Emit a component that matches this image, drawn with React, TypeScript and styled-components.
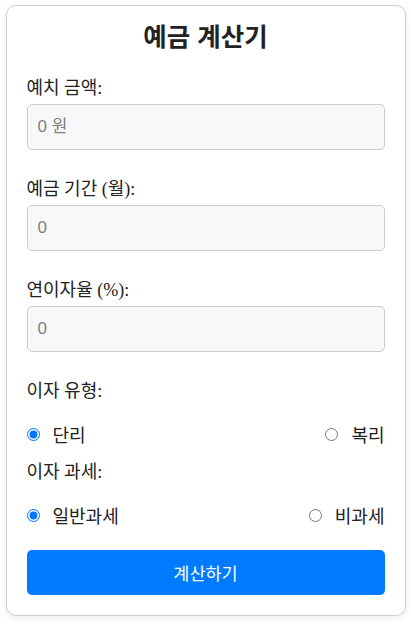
import React, { useState } from "react";
import styled, { createGlobalStyle } from "styled-components";

const GlobalStyle = createGlobalStyle`
  body {
    margin: 0;
    background: #ffffff;
    font-family: "Liberation Serif", "Noto Sans CJK KR", serif;
    color: #222;
  }
`;

const Card = styled.div`
  box-sizing: border-box;
  max-width: 400px;
  margin: 5px auto;
  padding: 10px 20px 20px;
  border: 1px solid #cfcfcf;
  border-radius: 10px;
  box-shadow: 0 2px 6px rgba(0, 0, 0, 0.08);
  background: #fff;
`;

const Title = styled.h2`
  margin: 0 0 20px;
  text-align: center;
  font-size: 25.5px;
  font-weight: bold;
  font-family: "Liberation Sans", "Noto Sans CJK KR", sans-serif;
  color: #222;
`;

const Group = styled.div`
  margin-bottom: 24px;
`;

const Label = styled.label`
  display: block;
  font-size: 18px;
  margin-bottom: 5px;
`;

const Input = styled.input`
  box-sizing: border-box;
  width: 100%;
  height: 46px;
  padding: 0 10px;
  border: 1px solid #cccccc;
  border-radius: 5px;
  background: #f7f8fa;
  font-size: 17px;
  font-family: "Liberation Sans", "Noto Sans CJK KR", sans-serif;
  color: #222;
  outline: none;

  &::placeholder {
    color: #808080;
  }
`;

const RadioRow = styled.div<{ $bottom: number }>`
  display: flex;
  justify-content: space-between;
  align-items: center;
  margin: 19px 0 ${(p) => p.$bottom}px;
`;

const RadioOption = styled.label`
  display: flex;
  align-items: center;
  font-size: 18px;
  font-family: "Liberation Sans", "Noto Sans CJK KR", sans-serif;
  cursor: pointer;
`;

const Radio = styled.input`
  width: 13px;
  height: 13px;
  margin: 0 13px 0 0;
  accent-color: #0075ff;
`;

const Button = styled.button`
  width: 100%;
  height: 45px;
  border: none;
  border-radius: 5px;
  background: #007bff;
  color: #fff;
  font-size: 17.5px;
  font-family: "Liberation Sans", "Noto Sans CJK KR", sans-serif;
  cursor: pointer;
`;

export default function App() {
  const [type, setType] = useState("simple");
  const [tax, setTax] = useState("normal");

  return (
    <>
      <GlobalStyle />
      <Card>
        <Title>예금 계산기</Title>
        <Group>
          <Label>예치 금액:</Label>
          <Input type="text" placeholder="0 원" />
        </Group>
        <Group>
          <Label>예금 기간 (월):</Label>
          <Input type="number" placeholder="0" />
        </Group>
        <Group>
          <Label>연이자율 (%):</Label>
          <Input type="number" placeholder="0" />
        </Group>
        <Label>이자 유형:</Label>
        <RadioRow $bottom={10}>
          <RadioOption>
            <Radio type="radio" name="type" checked={type === "simple"} onChange={() => setType("simple")} />
            단리
          </RadioOption>
          <RadioOption>
            <Radio type="radio" name="type" checked={type === "compound"} onChange={() => setType("compound")} />
            복리
          </RadioOption>
        </RadioRow>
        <Label>이자 과세:</Label>
        <RadioRow $bottom={22}>
          <RadioOption>
            <Radio type="radio" name="tax" checked={tax === "normal"} onChange={() => setTax("normal")} />
            일반과세
          </RadioOption>
          <RadioOption>
            <Radio type="radio" name="tax" checked={tax === "free"} onChange={() => setTax("free")} />
            비과세
          </RadioOption>
        </RadioRow>
        <Button>계산하기</Button>
      </Card>
    </>
  );
}
